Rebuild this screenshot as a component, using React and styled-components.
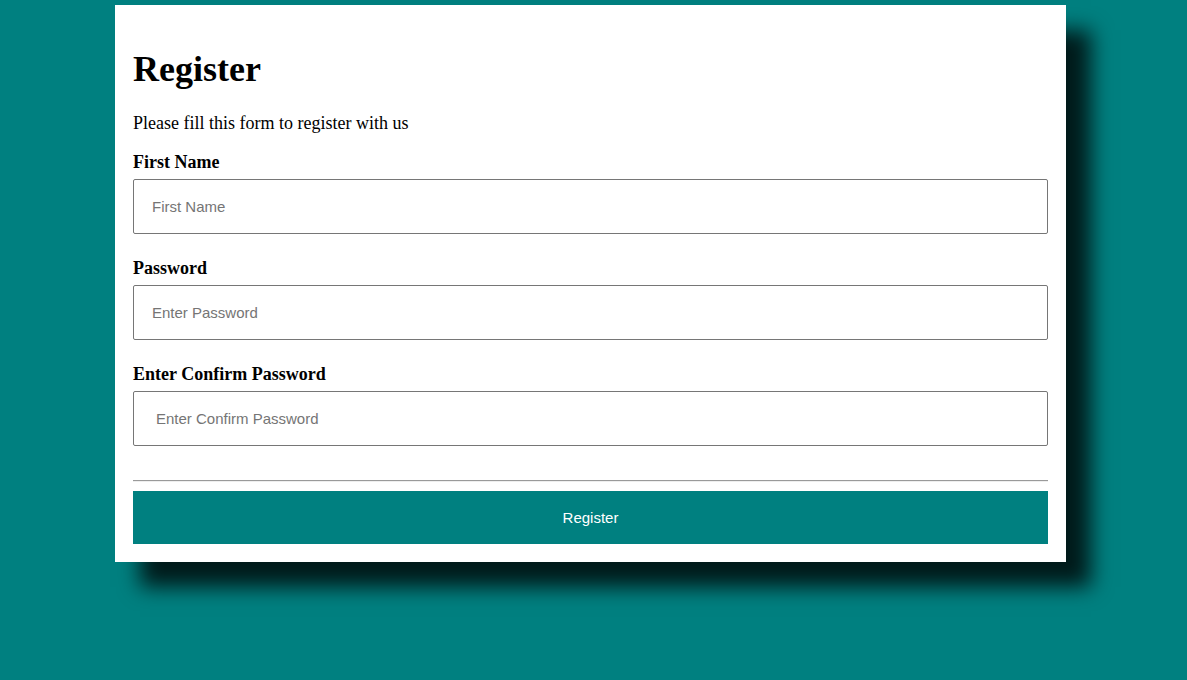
import React from 'react';
import styled, { createGlobalStyle } from 'styled-components';

const GlobalStyle = createGlobalStyle`
  html, body {
    margin: 0;
    padding: 0;
    background-color: #008080;
    font-family: 'Liberation Serif', 'Times New Roman', serif;
    font-size: 18px;
  }
`;

const StyledPage = styled.div`
  min-height: 680px;
  padding-top: 5px;
  box-sizing: border-box;
`;

const StyledCard = styled.form`
  width: 951px;
  margin-left: 115px;
  box-sizing: border-box;
  padding: 18px;
  background-color: #fff;
  box-shadow: 25px 25px 20px rgba(0, 0, 0, 0.8);
  display: flow-root;
`;

const StyledTitle = styled.h1`
  margin: 26px 0 23px;
  font-size: 36px;
  line-height: 41px;
  font-weight: bold;
  color: #000;
`;

const StyledIntro = styled.p`
  margin: 18px 0;
  font-size: 18px;
  line-height: 21px;
`;

const StyledField = styled.div`
  display: flow-root;
`;

const StyledLabel = styled.label`
  display: block;
  font-weight: bold;
  font-size: 18px;
  line-height: 21px;
`;

const StyledInput = styled.input`
  display: block;
  width: 100%;
  height: 55px;
  box-sizing: border-box;
  margin: 6px 0 24px;
  padding: 0 ${({ $indent }) => ($indent ? 22 : 18)}px;
  border: 1px solid #767676;
  border-radius: 2px;
  font-family: 'Liberation Sans', Arial, sans-serif;
  font-size: 15px;
  color: #000;
  background: #fff;

  &::placeholder {
    color: #757575;
  }
`;

const StyledRule = styled.hr`
  margin: 10px 0 9px;
  border: none;
  border-top: 1px solid #9a9a9a;
  border-bottom: 1px solid #eeeeee;
  height: 0;
`;

const StyledButton = styled.button`
  display: block;
  width: 100%;
  height: 53px;
  border: none;
  background-color: #008080;
  color: #fff;
  font-family: 'Liberation Sans', Arial, sans-serif;
  font-size: 15px;
  cursor: pointer;
`;

const fields = [
  { label: 'First Name', placeholder: 'First Name', type: 'text' },
  { label: 'Password', placeholder: 'Enter Password', type: 'password' },
  { label: 'Enter Confirm Password', placeholder: 'Enter Confirm Password', type: 'password', indent: true },
];

const App = () => (
  <StyledPage>
    <GlobalStyle />
    <StyledCard onSubmit={(e) => e.preventDefault()}>
      <StyledTitle>Register</StyledTitle>
      <StyledIntro>Please fill this form to register with us</StyledIntro>
      {fields.map((field) => (
        <StyledField key={field.label}>
          <StyledLabel>{field.label}</StyledLabel>
          <StyledInput type={field.type} placeholder={field.placeholder} $indent={field.indent} />
        </StyledField>
      ))}
      <StyledRule />
      <StyledButton type="submit">Register</StyledButton>
    </StyledCard>
  </StyledPage>
);

export default App;
